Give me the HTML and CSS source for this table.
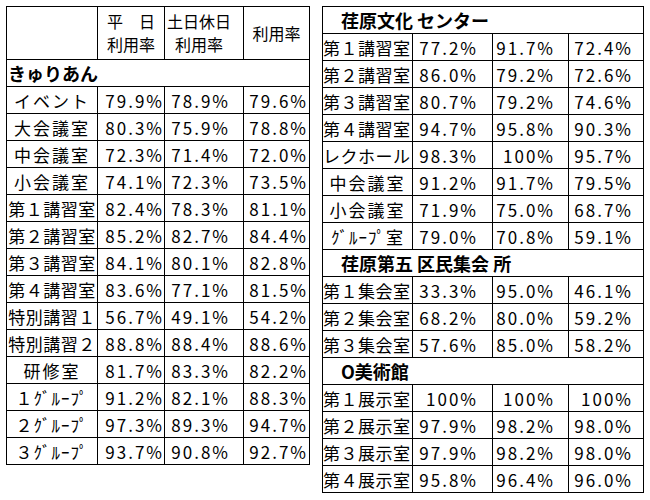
FILE: index.html
```html
<!DOCTYPE html>
<html lang="ja">
<head>
<meta charset="utf-8">
<link rel="stylesheet" href="styles.css">
</head>
<body>
<div class="wrap">
  <table class="tbl left">
    <colgroup><col class="lc1"><col class="lc2"><col class="lc3"><col class="lc4"></colgroup>
    <tr class="head">
      <td></td>
      <td class="h h2"><span class="hl">平　日</span><span class="hl">利用率</span></td>
      <td class="h h3"><span class="hl">土日休日</span><span class="hl">利用率</span></td>
      <td class="h h4">利用率</td>
    </tr>
    <tr class="sec"><td colspan="4" class="sec-l">きゅりあん</td></tr>
    <tr><td class="lab s4">イベント</td><td class="n a">79.9%</td><td class="n b">78.9%</td><td class="n c">79.6%</td></tr>
    <tr><td class="lab s4">大会議室</td><td class="n a">80.3%</td><td class="n b">75.9%</td><td class="n c">78.8%</td></tr>
    <tr><td class="lab s4">中会議室</td><td class="n a">72.3%</td><td class="n b">71.4%</td><td class="n c">72.0%</td></tr>
    <tr><td class="lab s4">小会議室</td><td class="n a">74.1%</td><td class="n b">72.3%</td><td class="n c">73.5%</td></tr>
    <tr><td class="lab s5">第１講習室</td><td class="n a">82.4%</td><td class="n b">78.3%</td><td class="n c">81.1%</td></tr>
    <tr><td class="lab s5">第２講習室</td><td class="n a">85.2%</td><td class="n b">82.7%</td><td class="n c">84.4%</td></tr>
    <tr><td class="lab s5">第３講習室</td><td class="n a">84.1%</td><td class="n b">80.1%</td><td class="n c">82.8%</td></tr>
    <tr><td class="lab s5">第４講習室</td><td class="n a">83.6%</td><td class="n b">77.1%</td><td class="n c">81.5%</td></tr>
    <tr><td class="lab s5">特別講習１</td><td class="n a">56.7%</td><td class="n b">49.1%</td><td class="n c">54.2%</td></tr>
    <tr><td class="lab s5">特別講習２</td><td class="n a">88.8%</td><td class="n b">88.4%</td><td class="n c">88.6%</td></tr>
    <tr><td class="lab s3">研修室</td><td class="n a">81.7%</td><td class="n b">83.3%</td><td class="n c">82.2%</td></tr>
    <tr><td class="lab sg">１ｸﾞﾙｰﾌﾟ</td><td class="n a">91.2%</td><td class="n b">82.1%</td><td class="n c">88.3%</td></tr>
    <tr><td class="lab sg">２ｸﾞﾙｰﾌﾟ</td><td class="n a">97.3%</td><td class="n b">89.3%</td><td class="n c">94.7%</td></tr>
    <tr><td class="lab sg">３ｸﾞﾙｰﾌﾟ</td><td class="n a">93.7%</td><td class="n b">90.8%</td><td class="n c">92.7%</td></tr>
  </table>

  <table class="tbl right">
    <colgroup><col class="rc1"><col class="rc2"><col class="rc3"><col class="rc4"></colgroup>
    <tr class="sec"><td colspan="4" class="sec-r">荏原文化 センター</td></tr>
    <tr><td class="lab s5 la">第１講習室</td><td class="n d">77.2%</td><td class="n e">91.7%</td><td class="n f">72.4%</td></tr>
    <tr><td class="lab s5 la">第２講習室</td><td class="n d">86.0%</td><td class="n e">79.2%</td><td class="n f">72.6%</td></tr>
    <tr><td class="lab s5 la">第３講習室</td><td class="n d">80.7%</td><td class="n e">79.2%</td><td class="n f">74.6%</td></tr>
    <tr><td class="lab s5 la">第４講習室</td><td class="n d">94.7%</td><td class="n e">95.8%</td><td class="n f">90.3%</td></tr>
    <tr><td class="lab s5 la">レクホール</td><td class="n d">98.3%</td><td class="n e">100%</td><td class="n f">95.7%</td></tr>
    <tr><td class="lab s4">中会議室</td><td class="n d">91.2%</td><td class="n e">91.7%</td><td class="n f">79.5%</td></tr>
    <tr><td class="lab s4">小会議室</td><td class="n d">71.9%</td><td class="n e">75.0%</td><td class="n f">68.7%</td></tr>
    <tr><td class="lab sg">ｸﾞﾙｰﾌﾟ室</td><td class="n d">79.0%</td><td class="n e">70.8%</td><td class="n f">59.1%</td></tr>
    <tr class="sec"><td colspan="4" class="sec-r">荏原第五 区民集会 所</td></tr>
    <tr><td class="lab s5 la">第１集会室</td><td class="n d">33.3%</td><td class="n e">95.0%</td><td class="n f">46.1%</td></tr>
    <tr><td class="lab s5 la">第２集会室</td><td class="n d">68.2%</td><td class="n e">80.0%</td><td class="n f">59.2%</td></tr>
    <tr><td class="lab s5 la">第３集会室</td><td class="n d">57.6%</td><td class="n e">85.0%</td><td class="n f">58.2%</td></tr>
    <tr class="sec"><td colspan="4" class="sec-r">O美術館</td></tr>
    <tr><td class="lab s5 la">第１展示室</td><td class="n d">100%</td><td class="n e">100%</td><td class="n f">100%</td></tr>
    <tr><td class="lab s5 la">第２展示室</td><td class="n d">97.9%</td><td class="n e">98.2%</td><td class="n f">98.0%</td></tr>
    <tr><td class="lab s5 la">第３展示室</td><td class="n d">97.9%</td><td class="n e">98.2%</td><td class="n f">98.0%</td></tr>
    <tr><td class="lab s5 la">第４展示室</td><td class="n d">95.8%</td><td class="n e">96.4%</td><td class="n f">96.0%</td></tr>
  </table>
</div>
</body>
</html>
```
FILE: styles.css
```css
html, body {
  margin: 0;
  background: #fff;
}
body {
  padding: 6px;
  font-family: "Noto Sans CJK JP", "Noto Sans", sans-serif;
  color: #000;
}
.wrap {
  display: flex;
  align-items: flex-start;
  gap: 12px;
}
.tbl {
  border-collapse: collapse;
  table-layout: fixed;
}
.left { width: 304px; }
.right { width: 322px; }
.lc1 { width: 91px; }
.lc2 { width: 67px; }
.lc3 { width: 79px; }
.lc4 { width: 66px; }
.rc1 { width: 90px; }
.rc2 { width: 80px; }
.rc3 { width: 76px; }
.rc4 { width: 75px; }

td {
  border: 1px solid #000;
  padding: 0;
  height: 26px;
  font-size: 17px;
  line-height: 1;
  white-space: nowrap;
  overflow: hidden;
  vertical-align: middle;
}
.head td {
  height: 52px;
}
.h {
  text-align: center;
}
.hl {
  display: block;
  font-size: 16px;
  line-height: 23.5px;
}
.h4 { font-size: 16px; }
.h3 { padding-right: 10px; }

.sec td { height: 26px; }
.sec-l {
  font-weight: bold;
  font-size: 18px;
  padding-left: 1px;
  text-align: left;
}
.sec-r {
  font-weight: bold;
  font-size: 18px;
  padding-left: 18px;
  text-align: left;
}

.lab { text-align: center; }
.la { text-align: left; }
.s3 { letter-spacing: 2px; }
.s4 { letter-spacing: 2px; }
.s5 { letter-spacing: 0.5px; }
.sg { letter-spacing: 1px; }

.n {
  text-align: right;
  letter-spacing: 2px;
}
.a { padding-right: 0; }
.b { padding-right: 13px; }
.c { padding-right: 1px; }
.d { padding-right: 14px; }
.e { padding-right: 13px; }
.f { padding-right: 10px; }
```
